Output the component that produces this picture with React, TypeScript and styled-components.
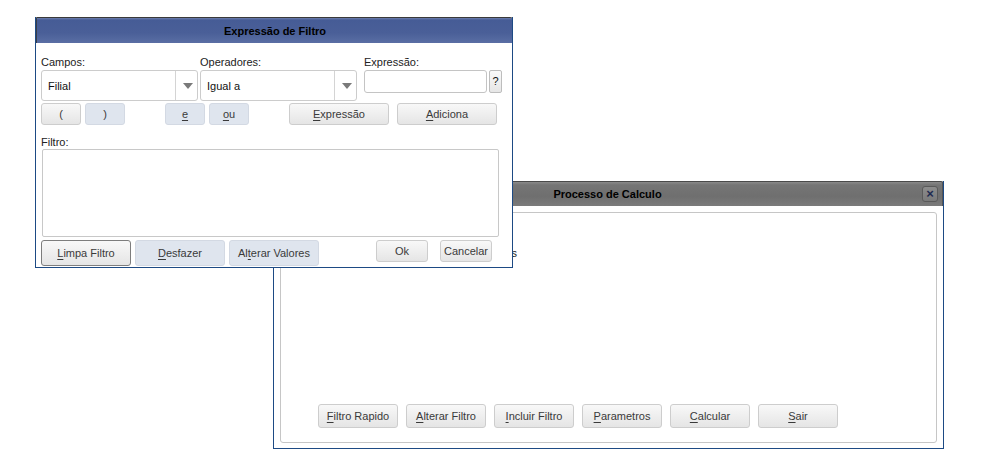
import React from 'react'
import styled, { createGlobalStyle, css } from 'styled-components'

const GlobalStyle = createGlobalStyle`
  html, body {
    margin: 0;
    padding: 0;
    background: #ffffff;
    font-family: 'Liberation Sans', Arial, sans-serif;
    font-size: 11px;
    color: #222;
  }
`

// mnemonic: letra sublinhada
const Mn = ({ text, at = 0 }: { text: string; at?: number }) => (
  <>
    {text.slice(0, at)}
    <u>{text.charAt(at)}</u>
    {text.slice(at + 1)}
  </>
)

export default function App() {
  return (
    <>
      <GlobalStyle />
      <Desktop>
        <Window $left={273} $top={181} $width={671} $height={268} $z={1}>
          <GrayTitle>
            <TitleText>Processo de Calculo</TitleText>
            <CloseBtn>×</CloseBtn>
          </GrayTitle>
          <CalcBody>
            <Panel>
              <HiddenInfo>
                <span>Defina os filtros e os parametros</span>
              </HiddenInfo>
              <CalcButtons>
                <Btn $w={80} $h={24}><Mn text="Filtro Rapido" /></Btn>
                <Btn $w={80} $h={24}><Mn text="Alterar Filtro" /></Btn>
                <Btn $w={80} $h={24}><Mn text="Incluir Filtro" /></Btn>
                <Btn $w={80} $h={24}><Mn text="Parametros" /></Btn>
                <Btn $w={80} $h={24}><Mn text="Calcular" /></Btn>
                <Btn $w={80} $h={24}><Mn text="Sair" /></Btn>
              </CalcButtons>
            </Panel>
          </CalcBody>
        </Window>

        <Window $left={35} $top={17} $width={478} $height={251} $z={2}>
          <BlueTitle>
            <TitleText>Expressão de Filtro</TitleText>
          </BlueTitle>
          <FilterBody>
            <FieldGrid>
              <Label>Campos:</Label>
              <Label>Operadores:</Label>
              <Label>Expressão:</Label>
              <Combo>
                <ComboValue>Filial</ComboValue>
                <ComboArrow />
              </Combo>
              <Combo>
                <ComboValue>Igual a</ComboValue>
                <ComboArrow />
              </Combo>
              <ExprWrap>
                <TextInput />
                <HelpBtn>?</HelpBtn>
              </ExprWrap>
            </FieldGrid>

            <ButtonRow>
              <Btn $w={40} $h={22}>(</Btn>
              <Btn $w={40} $h={22} $tone="blue" $ml={4}>)</Btn>
              <Btn $w={40} $h={22} $tone="blue" $ml={40}><Mn text="e" /></Btn>
              <Btn $w={40} $h={22} $tone="blue" $ml={4}><Mn text="ou" /></Btn>
              <Btn $w={100} $h={22} $ml={40}><Mn text="Expressão" /></Btn>
              <Btn $w={100} $h={22} $ml={8}><Mn text="Adiciona" /></Btn>
            </ButtonRow>

            <FilterLabel>Filtro:</FilterLabel>
            <TextArea />

            <ButtonRow $mt={3}>
              <Btn $w={90} $h={26} $tone="focus">
                <Mn text="Limpa Filtro" />
              </Btn>
              <Btn $w={90} $h={26} $tone="blue" $ml={4}>
                <Mn text="Desfazer" />
              </Btn>
              <Btn $w={90} $h={26} $tone="blue" $ml={4}>
                <Mn text="Alterar Valores" at={2} />
              </Btn>
              <Btn $w={52} $h={22} $ml={57}>Ok</Btn>
              <Btn $w={52} $h={22} $ml={12}>Cancelar</Btn>
            </ButtonRow>
          </FilterBody>
        </Window>
      </Desktop>
    </>
  )
}

const Desktop = styled.div`
  position: relative;
  width: 982px;
  height: 459px;
  overflow: hidden;
`

interface WindowProps {
  $left: number
  $top: number
  $width: number
  $height: number
  $z: number
}

const Window = styled.div<WindowProps>`
  position: absolute;
  left: ${({ $left }) => $left}px;
  top: ${({ $top }) => $top}px;
  width: ${({ $width }) => $width}px;
  height: ${({ $height }) => $height}px;
  z-index: ${({ $z }) => $z};
  box-sizing: border-box;
  border: 1px solid #1d4a84;
  border-top: none;
  background: #fff;
  display: flex;
  flex-direction: column;
  overflow: hidden;
`

const titleBase = css`
  flex: none;
  margin: 0 -1px;
  display: flex;
  align-items: center;
  justify-content: center;
  position: relative;
  border-radius: 2px 3px 0 0;
  box-sizing: border-box;
`

const BlueTitle = styled.div`
  ${titleBase};
  height: 26px;
  background: linear-gradient(#6c7eae 0, #465c96 2px, #4a5f98 60%, #5a6ea4 100%);
  border-top: 1px solid #3a3a3a;
  border-left: 2px solid #3a3f4a;
`

const GrayTitle = styled.div`
  ${titleBase};
  height: 25px;
  background: linear-gradient(#8a8a8a 0, #757575 3px, #6f6f6f 60%, #7b7b7b 100%);
  border-top: 1px solid #4a4a4a;
  border-right: 2px solid #555;
`

const TitleText = styled.span`
  font-weight: bold;
  font-size: 11px;
  color: #000;
`

const CloseBtn = styled.div`
  position: absolute;
  right: 4px;
  top: 4px;
  width: 16px;
  height: 16px;
  box-sizing: border-box;
  border: 1px solid #5a5a5a;
  border-radius: 3px;
  background: linear-gradient(#8c8c8c, #7a7a7a);
  color: #1e2a50;
  font-weight: bold;
  font-size: 13px;
  line-height: 13px;
  text-align: center;
`

const CalcBody = styled.div`
  flex: 1;
  padding: 6px 6px 5px 6px;
  display: flex;
`

const Panel = styled.div`
  flex: 1;
  border: 1px solid #c6c6c6;
  border-radius: 3px;
  display: flex;
  flex-direction: column;
  justify-content: space-between;
  padding: 0 0 14px 37px;
`

const HiddenInfo = styled.div`
  width: 236px;
  margin-left: -37px;
  margin-top: 34px;
  display: flex;
  justify-content: flex-end;
  white-space: nowrap;
  color: #222;

  span {
    flex: none;
  }
`

const CalcButtons = styled.div`
  display: flex;
  gap: 8px;
`

const FilterBody = styled.div`
  flex: 1;
  padding: 0 0 0 5px;
  display: flex;
  flex-direction: column;
`

const FieldGrid = styled.div`
  display: grid;
  grid-template-columns: 157px 157px 143px;
  column-gap: 2px;
  row-gap: 1px;
  margin-top: 12px;

  & > :nth-child(3),
  & > :nth-child(6) {
    margin-left: 5px;
  }
`

const Label = styled.div`
  color: #222;
  height: 14px;
  line-height: 14px;
`

const Combo = styled.div`
  height: 31px;
  box-sizing: border-box;
  border: 1px solid #cccccc;
  border-radius: 3px;
  background: #fff;
  display: flex;
  align-items: center;
`

const ComboValue = styled.div`
  flex: 1;
  padding-left: 6px;
  color: #111;
`

const ComboArrow = styled.div`
  width: 21px;
  height: 100%;
  border-left: 1px solid #d4d4d4;
  position: relative;

  &::after {
    content: '';
    position: absolute;
    left: 7px;
    top: 12px;
    border-left: 5px solid transparent;
    border-right: 5px solid transparent;
    border-top: 6px solid #7a7a7a;
  }
`

const ExprWrap = styled.div`
  display: flex;
  gap: 2px;
  align-items: flex-start;
`

const TextInput = styled.div`
  width: 127px;
  height: 23px;
  box-sizing: border-box;
  border: 1px solid #c4c4c4;
  border-radius: 3px;
  background: #fff;
`

const HelpBtn = styled.div`
  width: 13px;
  height: 23px;
  box-sizing: border-box;
  border: 1px solid #bdbdbd;
  border-radius: 2px;
  background: linear-gradient(#fafafa, #e6e6e6);
  text-align: center;
  line-height: 20px;
  color: #111;
`

const ButtonRow = styled.div<{ $mt?: number }>`
  display: flex;
  align-items: flex-start;
  margin-top: ${({ $mt }) => $mt ?? 2}px;
`

interface BtnProps {
  $w: number
  $h: number
  $tone?: 'gray' | 'blue' | 'focus'
  $ml?: number
}

const Btn = styled.div<BtnProps>`
  width: ${({ $w }) => $w}px;
  height: ${({ $h }) => $h}px;
  margin-left: ${({ $ml }) => $ml ?? 0}px;
  flex: none;
  box-sizing: border-box;
  border-radius: 3px;
  display: flex;
  align-items: center;
  justify-content: center;
  color: #3a3a3a;
  white-space: nowrap;
  border: 1px solid
    ${({ $tone }) =>
      $tone === 'blue' ? '#d3d9e3' : $tone === 'focus' ? '#7d7d7d' : '#cdcdcd'};
  background: ${({ $tone }) =>
    $tone === 'blue' ? '#dfe5ee' : 'linear-gradient(#f8f8f8, #e5e5e5)'};

  u {
    text-decoration-thickness: 1px;
    text-underline-offset: 2px;
  }
`

const FilterLabel = styled.div`
  margin-top: 11px;
  height: 12px;
  line-height: 12px;
`

const TextArea = styled.div`
  margin-top: 1px;
  margin-left: 1px;
  width: 457px;
  height: 88px;
  box-sizing: border-box;
  border: 1px solid #c8c8c8;
  border-radius: 2px;
  background: #fff;
`
